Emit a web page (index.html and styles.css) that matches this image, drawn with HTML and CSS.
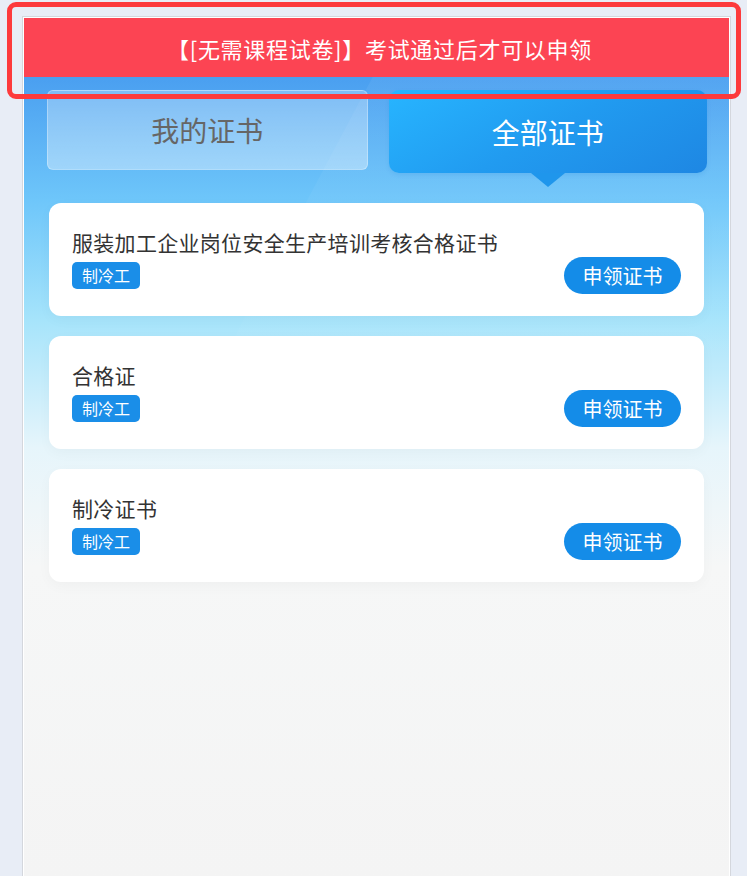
FILE: index.html
```html
<!DOCTYPE html>
<html lang="zh-CN">
<head>
<meta charset="utf-8">
<title>证书</title>
<link rel="stylesheet" href="styles.css">
</head>
<body>
<div class="frame">
  <div class="screen">
    <div class="notice">【[无需课程试卷]】考试通过后才可以申领</div>
    <div class="main">
      <div class="sheen"></div>
      <div class="tabs">
        <div class="tab tab-mine">我的证书</div>
        <div class="tab tab-all">全部证书</div>
      </div>
      <div class="list">
        <div class="card">
          <div class="card-title">服装加工企业岗位安全生产培训考核合格证书</div>
          <div class="card-row">
            <span class="tag">制冷工</span>
            <button class="apply">申领证书</button>
          </div>
        </div>
        <div class="card">
          <div class="card-title">合格证</div>
          <div class="card-row">
            <span class="tag">制冷工</span>
            <button class="apply">申领证书</button>
          </div>
        </div>
        <div class="card">
          <div class="card-title">制冷证书</div>
          <div class="card-row">
            <span class="tag">制冷工</span>
            <button class="apply">申领证书</button>
          </div>
        </div>
      </div>
    </div>
  </div>
</div>
<div class="highlight"></div>
</body>
</html>
```

FILE: styles.css
```css
* { box-sizing: border-box; }
html, body { margin: 0; padding: 0; }
body {
  background: #e8edf6;
  font-family: "Noto Sans CJK SC", "Noto Sans", sans-serif;
  height: 876px;
  overflow: hidden;
  position: relative;
}
.frame {
  margin: 16px 0 0 22px;
  width: 709px;
  height: 860px;
  border: 1px solid #d4d7dd;
  border-bottom: none;
  background: #ffffff;
  padding: 1px 1px 0 1px;
}
.screen {
  height: 100%;
  display: flex;
  flex-direction: column;
}
.notice {
  height: 59px;
  background: #fc4453;
  color: #ffffff;
  font-size: 22px;
  letter-spacing: 0.7px;
  display: flex;
  align-items: center;
  justify-content: center;
  flex: none;
  padding-left: 6px;
}
.main {
  flex: 1;
  position: relative;
  overflow: hidden;
  background: linear-gradient(180deg, #4a9ff0 0px, #6ec6fa 123px, #a6e4fb 243px, #e6f5fb 370px, #f6f7f7 490px, #f4f4f4 100%);
  padding: 13px 22px 0 23px;
}
.sheen {
  position: absolute;
  top: -40px;
  left: 370px;
  width: 600px;
  height: 330px;
  background: linear-gradient(180deg, rgba(255,255,255,0.06), rgba(255,255,255,0.02));
  transform: skewX(-28deg);
  transform-origin: top left;
  pointer-events: none;
}
.tabs {
  position: relative;
  display: flex;
  gap: 21px;
  height: 83px;
}
.tab {
  flex: 1;
  display: flex;
  align-items: center;
  justify-content: center;
  font-size: 28px;
}
.tab-mine {
  height: 80px;
  color: #666666;
  background: linear-gradient(180deg, rgba(255,255,255,0.28), rgba(255,255,255,0.38));
  border: 1px solid rgba(255,255,255,0.3);
  border-radius: 6px;
}
.tab-all {
  position: relative;
  height: 83px;
  color: #ffffff;
  background: linear-gradient(150deg, #27b5ff 0%, #219bf0 50%, #1e87e3 100%);
  border-radius: 10px;
  box-shadow: 0 2px 4px rgba(30, 120, 210, 0.15);
}
.tab-all::after {
  content: "";
  position: absolute;
  left: 50%;
  bottom: -14px;
  margin-left: -17px;
  border-left: 17px solid transparent;
  border-right: 17px solid transparent;
  border-top: 14px solid #1f96ec;
}
.list {
  position: relative;
  display: flex;
  flex-direction: column;
  gap: 20px;
  margin-top: 30px;
  padding: 0 3px 0 2px;
}
.card {
  background: #ffffff;
  border-radius: 12px;
  height: 113px;
  padding: 25px 23px 0 23px;
  box-shadow: 0 4px 14px rgba(0, 0, 0, 0.03);
}
.card-title {
  font-size: 21px;
  letter-spacing: 0.3px;
  line-height: 28px;
  height: 28px;
  color: #333333;
  white-space: nowrap;
}
.card-row {
  display: flex;
  align-items: center;
  justify-content: space-between;
  height: 38px;
}
.tag {
  display: inline-flex;
  align-items: center;
  justify-content: center;
  width: 68px;
  height: 27px;
  background: #1a8ee8;
  color: #ffffff;
  font-size: 16px;
  border-radius: 5px;
}
.apply {
  width: 117px;
  height: 37px;
  border: none;
  border-radius: 19px;
  background: #148ce8;
  color: #ffffff;
  font-family: "Noto Sans CJK SC", "Noto Sans", sans-serif;
  font-size: 20px;
  padding: 0;
  margin-top: 1px;
}
.highlight {
  position: absolute;
  left: 7px;
  top: 2px;
  width: 734px;
  height: 97px;
  border: 5px solid #fd3a3c;
  border-radius: 9px;
  pointer-events: none;
}
```
